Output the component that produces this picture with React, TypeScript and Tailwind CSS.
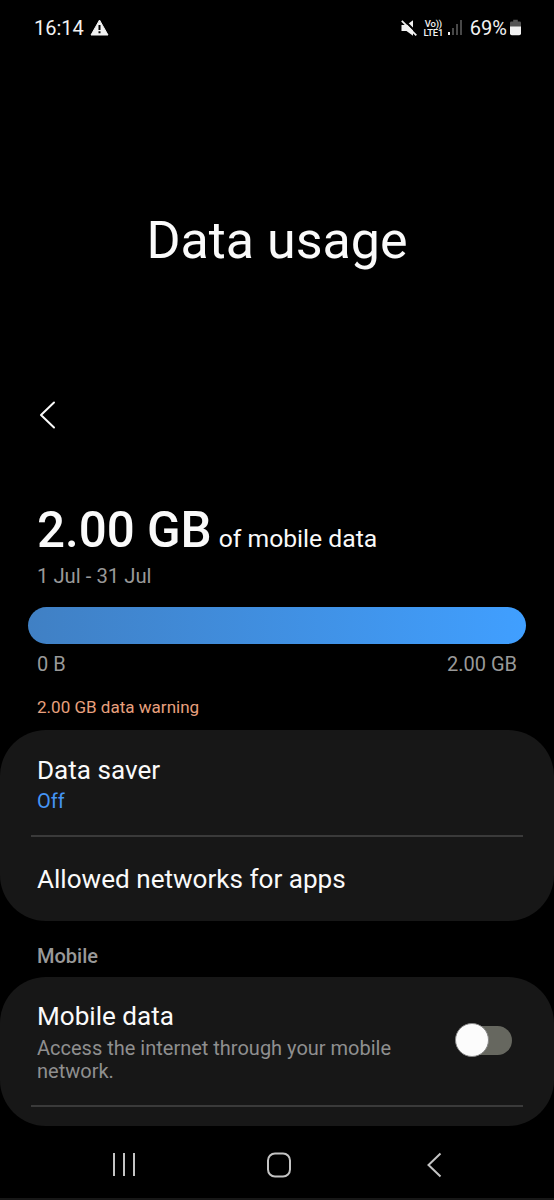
import React from 'react';

interface SettingRowProps {
  title: string;
  children?: React.ReactNode;
  className?: string;
}

const SettingRow: React.FC<SettingRowProps> = ({ title, children, className = '' }) => (
  <div className={`flex flex-col px-[37px] ${className}`}>
    <div className="text-[26.1px] leading-8 text-[#fafafa]">{title}</div>
    {children}
  </div>
);

const Divider: React.FC = () => <div className="mx-[31px] h-[1.5px] shrink-0 bg-[#3a3a3a]" />;

const StatusBar: React.FC = () => (
  <header className="flex h-[55px] shrink-0 items-center pl-[34px] pr-[33px] text-[#f2f2f2]">
    <span className="text-[20px] leading-6">16:14</span>
    <svg className="ml-[6px] h-[17px] w-[19px]" viewBox="0 0 19 17">
      <path d="M9.5 1 18 16H1Z" fill="#f2f2f2" stroke="#f2f2f2" strokeWidth="1" strokeLinejoin="round" />
      <path d="M9.5 6v5M9.5 12.3v2" stroke="#000" strokeWidth="2" />
    </svg>
    <div className="ml-auto flex items-center">
      <svg className="h-4 w-4" viewBox="0 0 16 16">
        <path d="M0.5 5h5L12 0.3v15.4L5.500 11h-5Z" fill="#f2f2f2" />
        <path d="M2.500 -0.500 17 14" stroke="#000" strokeWidth="2" />
        <path d="M0.8 0.8 15.300 15.300" stroke="#f2f2f2" strokeWidth="1.8" />
      </svg>
      <div className="ml-[6px] flex w-[21px] flex-col items-center text-[9.5px] font-medium leading-[9px] tracking-tight">
        <span>Vo))</span>
        <span>LTE1</span>
      </div>
      <svg className="ml-[4px] h-[15px] w-[14px]" viewBox="0 0 14 15">
        <path d="M0 12h2v3H0Z" fill="#f2f2f2" />
        <path d="M4 8h2v7H4ZM8 4h2v11H8ZM12 0h2v15h-2Z" fill="#484848" />
      </svg>
      <span className="ml-[8px] text-[20px] leading-6">69%</span>
      <svg className="ml-[3px] h-[17px] w-[11px]" viewBox="0 0 12 17">
        <path d="M3.5 0h5v2H10.500q1.500 0 1.500 1.500V8H0V3.500Q0 2 1.500 2h2Z" fill="#555" />
        <path d="M0 7.500h12V15q0 2-2 2H2q-2 0-2-2Z" fill="#f2f2f2" />
      </svg>
    </div>
  </header>
);

const App: React.FC = () => {
  return (
    <div className="flex h-[1200px] w-[554px] flex-col overflow-hidden bg-black font-['Roboto',sans-serif]">
      <StatusBar />

      <h1 className="mt-[156px] h-[60px] shrink-0 text-center text-[52px] leading-[60px] text-[#fafafa]">
        Data usage
      </h1>

      <button type="button" aria-label="Back" className="ml-[38px] mt-[129px] h-[30px] w-[18px] shrink-0">
        <svg className="h-[30px] w-[18px]" viewBox="0 0 18 30" fill="none">
          <path
            d="M16 2.500 3 15 16 27.500"
            stroke="#fafafa"
            strokeWidth="2"
            strokeLinecap="round"
            strokeLinejoin="round"
          />
        </svg>
      </button>

      <section className="mt-[70px] flex h-[230px] shrink-0 flex-col">
        <div className="flex h-[60px] items-baseline px-[37px] leading-[60px] text-[#fafafa]">
          <span className="text-[49.3px] font-medium">2.00 GB</span>
          <span className="ml-[7px] text-[24.700px]">of mobile data</span>
        </div>
        <div className="mt-[4px] px-[37px] text-[20.3px] leading-6 text-[#999]">1 Jul - 31 Jul</div>
        <div className="mx-[28px] mt-[19px] h-[37px] rounded-full bg-linear-to-r from-[#4080c4] to-[#409fff]" />
        <div className="mt-[8px] flex justify-between px-[37px] text-[20px] leading-6 text-[#999]">
          <span>0 B</span>
          <span>2.00 GB</span>
        </div>
        <div className="mt-[19px] px-[37px] text-[17.050px] leading-6 text-[#e8a07e]">2.00 GB data warning</div>
      </section>

      <section className="flex h-[191px] shrink-0 flex-col rounded-[46px] bg-[#171717]">
        <SettingRow title="Data saver" className="h-[105px] pt-[24px]">
          <div className="pt-px text-[20px] leading-[29px] text-[#4595f5]">Off</div>
        </SettingRow>
        <Divider />
        <SettingRow title="Allowed networks for apps" className="pt-[26px]" />
      </section>

      <h2 className="h-[56px] shrink-0 px-[37px] pt-[23px] text-[20px] font-medium leading-6 text-[#999]">Mobile</h2>

      <section className="flex h-[149px] shrink-0 flex-col rounded-[46px] bg-[#171717]">
        <div className="flex h-[128px] items-center">
          <SettingRow title="Mobile data" className="w-[440px]">
            <div className="-mb-px pt-[5px] text-[20px] leading-[23.5px] text-[#8f8f8f]">
              Access the internet through your mobile network.
            </div>
          </SettingRow>
          <button
            type="button"
            role="switch"
            aria-checked={false}
            aria-label="Mobile data"
            className="mb-[2px] ml-[16px] flex h-[29px] w-[56px] items-center rounded-full bg-[#66675f]"
          >
            <span className="-ml-px size-[34px] shrink-0 rounded-full border border-[#888] bg-[#fcfcfc]" />
          </button>
        </div>
        <Divider />
      </section>

      <nav className="flex h-[72px] shrink-0 items-center pl-[112px] pt-[6px]">
        <svg className="h-[26px] w-[24px]" viewBox="0 0 24 26" stroke="#c4c4c4" strokeWidth="2">
          <path d="M2 1v23M12 1v23M22 1v23" />
        </svg>
        <svg className="ml-[130px] size-[26px]" viewBox="0 0 26 26" fill="none">
          <rect x="2" y="1.500" width="22" height="23" rx="7" stroke="#c4c4c4" strokeWidth="2" />
        </svg>
        <svg className="ml-[134px] h-[26px] w-[18px]" viewBox="0 0 18 26" fill="none">
          <path d="M14.500 1.500 2.500 13 14.500 24.500" stroke="#c4c4c4" strokeWidth="2" />
        </svg>
      </nav>
      <div className="h-[2px] shrink-0 bg-[#171717]" />
    </div>
  );
};

export default App;
